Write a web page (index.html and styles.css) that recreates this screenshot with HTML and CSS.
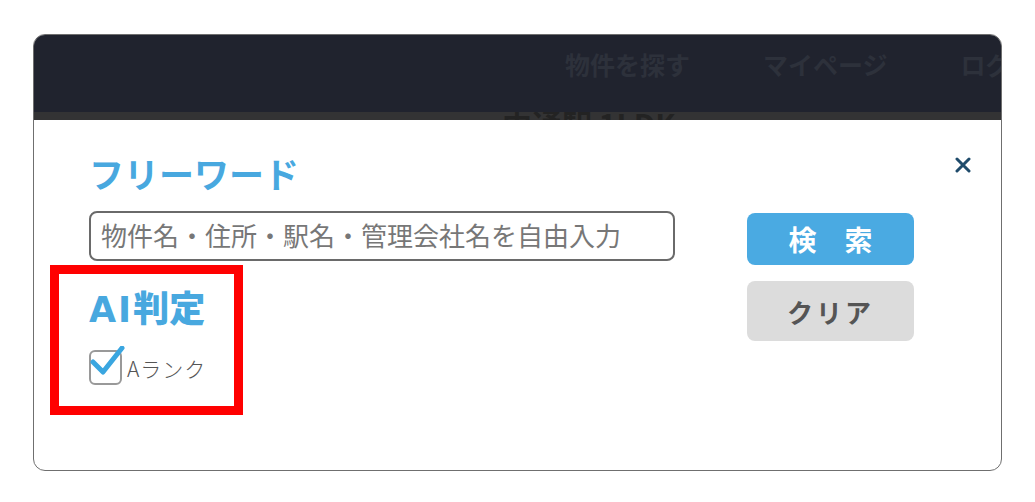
FILE: index.html
```html
<!DOCTYPE html>
<html lang="ja">
<head>
<meta charset="utf-8">
<link rel="stylesheet" href="styles.css">
</head>
<body>
<div class="frame">
  <header class="topbar">
    <nav class="nav">
      <span class="nav-item">物件を探す</span>
      <span class="nav-item">マイページ</span>
      <span class="nav-item">ログ</span>
    </nav>
  </header>
  <div class="strip"><span class="strip-text">中通駅 1LDK</span></div>
  <div class="modal">
    <div class="left">
      <h2 class="title">フリーワード</h2>
      <div class="input">物件名・住所・駅名・管理会社名を自由入力</div>
      <h2 class="title ai"><span class="ai-latin">AI</span>判定</h2>
      <label class="check-row">
        <span class="checkbox">
          <svg class="checkmark" width="40" height="36" viewBox="0 0 40 36"><polyline points="3,16 13,26 32,2" fill="none" stroke="#3aa6e0" stroke-width="5" stroke-linecap="round" stroke-linejoin="round"/></svg>
        </span>
        <span class="check-label">Aランク</span>
      </label>
    </div>
    <div class="right">
      <button class="btn btn-search">検　索</button>
      <button class="btn btn-clear">クリア</button>
    </div>
    <svg class="close" width="16" height="16" viewBox="0 0 16 16"><path d="M2 2 L14 14 M14 2 L2 14" stroke="#1f4b6b" stroke-width="3" stroke-linecap="round"/></svg>
  </div>
  <div class="highlight"></div>
</div>
</body>
</html>
```

FILE: styles.css
```css
* { box-sizing: border-box; }
html, body { margin: 0; padding: 0; background: #fff; }
body {
  font-family: "Noto Sans CJK JP", "Noto Sans", sans-serif;
  padding: 34px 0 0 33px;
}
.frame {
  position: relative;
  width: 969px;
  height: 437px;
  border: 1px solid #6f6f6f;
  border-radius: 12px;
  overflow: hidden;
  background: #fff;
}
.topbar {
  height: 77px;
  background: #20232e;
  display: flex;
  align-items: center;
  padding-left: 531px;
}
.nav {
  display: flex;
  gap: 73px;
  padding-bottom: 20px;
}
.nav-item {
  font-size: 25px;
  font-weight: 700;
  color: #2d313b;
  white-space: nowrap;
}
.strip {
  height: 8px;
  background: #333334;
  overflow: hidden;
  padding-left: 468px;
}
.strip-text {
  display: block;
  font-size: 30px;
  font-weight: 700;
  line-height: 30px;
  color: #232323;
  margin-top: -4px;
  white-space: nowrap;
}
.modal {
  position: relative;
  display: flex;
  padding: 31px 0 0 55px;
}
.left { width: 586px; }
.title {
  margin: 0;
  font-size: 35px;
  line-height: 44px;
  font-weight: 700;
  color: #48a8df;
}
.input {
  margin-top: 16px;
  height: 50px;
  border: 2px solid #6a6a6a;
  border-radius: 8px;
  padding-left: 10px;
  font-size: 26px;
  line-height: 44px;
  color: #777;
  white-space: nowrap;
  overflow: hidden;
}
.title.ai {
  margin-top: 23px;
  font-size: 36px;
  font-weight: 900;
}
.ai-latin {
  font-family: "DejaVu Sans", sans-serif;
  font-weight: 700;
  font-size: 35px;
  letter-spacing: 2px;
}
.check-row {
  display: flex;
  align-items: center;
  margin-top: 18px;
}
.checkbox {
  position: relative;
  width: 33px;
  height: 35px;
  border: 2px solid #999;
  border-radius: 6px;
  flex: none;
}
.checkmark {
  position: absolute;
  left: -1px;
  top: -6px;
}
.check-label {
  margin-left: 5px;
  font-size: 21px;
  font-weight: 300;
  color: #555;
  letter-spacing: 1px;
}
.right {
  margin-left: 72px;
  margin-top: 62px;
  width: 167px;
  display: flex;
  flex-direction: column;
  gap: 16px;
}
.btn {
  border: none;
  border-radius: 8px;
  font-family: "Noto Sans CJK JP", sans-serif;
  font-weight: 700;
  cursor: pointer;
  padding: 0;
}
.btn-search {
  height: 52px;
  background: #4aaae2;
  color: #fff;
  font-size: 28px;
}
.btn-clear {
  height: 60px;
  background: #dcdcdc;
  color: #555;
  font-size: 26px;
  letter-spacing: 3px;
}
.close {
  position: absolute;
  right: 30px;
  top: 37px;
}
.highlight {
  position: absolute;
  left: 16px;
  top: 230px;
  width: 193px;
  height: 150px;
  border: 9px solid #ff0000;
}
```
